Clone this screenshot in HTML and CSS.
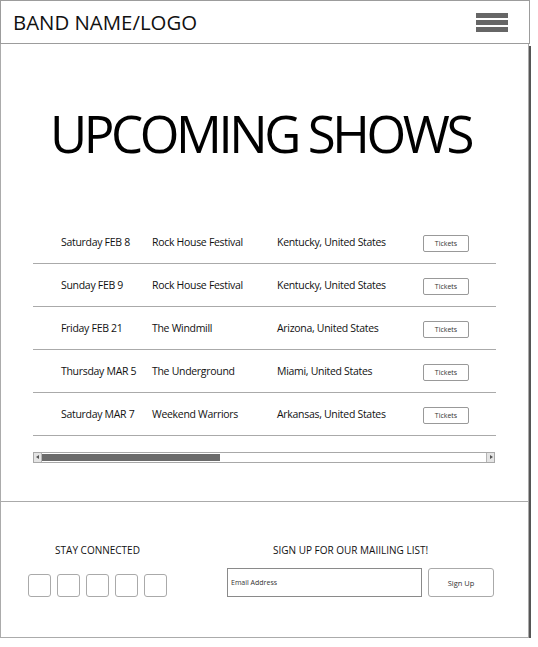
FILE: index.html
```html
<!DOCTYPE html>
<html lang="en">
<head>
<meta charset="utf-8">
<title>Band</title>
<link rel="stylesheet" href="styles.css">
</head>
<body>
<div class="site">
  <header class="topbar">
    <div class="logo">BAND NAME/LOGO</div>
    <div class="burger"><span></span><span></span><span></span></div>
  </header>
  <main class="page">
    <h1 class="title">UPCOMING SHOWS</h1>
    <div class="shows">
      <div class="row"><span class="date">Saturday FEB 8</span><span class="venue">Rock House Festival</span><span class="loc">Kentucky, United States</span><span class="btn">Tickets</span></div>
      <div class="row"><span class="date">Sunday FEB 9</span><span class="venue">Rock House Festival</span><span class="loc">Kentucky, United States</span><span class="btn">Tickets</span></div>
      <div class="row"><span class="date">Friday FEB 21</span><span class="venue">The Windmill</span><span class="loc">Arizona, United States</span><span class="btn">Tickets</span></div>
      <div class="row"><span class="date">Thursday MAR 5</span><span class="venue">The Underground</span><span class="loc">Miami, United States</span><span class="btn">Tickets</span></div>
      <div class="row"><span class="date">Saturday MAR 7</span><span class="venue">Weekend Warriors</span><span class="loc">Arkansas, United States</span><span class="btn">Tickets</span></div>
    </div>
    <div class="scrollbar">
      <span class="arrow arrow-left"></span>
      <span class="track"><span class="thumb"></span></span>
      <span class="arrow arrow-right"></span>
    </div>
    <footer class="footer">
      <div class="connect">
        <div class="label">STAY CONNECTED</div>
        <div class="socials"><span></span><span></span><span></span><span></span><span></span></div>
      </div>
      <div class="mailing">
        <div class="label mail-label">SIGN UP FOR OUR MAIILING LIST!</div>
        <div class="form">
          <div class="email">Email Address</div>
          <div class="signup">Sign Up</div>
        </div>
      </div>
    </footer>
  </main>
</div>
</body>
</html>
```
FILE: styles.css
```css
* { box-sizing: border-box; }
body {
  margin: 0;
  background: #fff;
  font-family: "Open Sans", "Noto Sans", sans-serif;
  color: #111;
}
.site { width: 532px; }
.topbar {
  position: relative;
  z-index: 1;
  width: 530px;
  height: 44px;
  border: 1px solid #9c9c9c;
  background: #fff;
  display: flex;
  align-items: center;
  justify-content: space-between;
  padding: 0 21px 0 12px;
}
.logo {
  font-size: 20.4px;
  line-height: 1;
  color: #111;
  margin-top: 1px;
}
.burger {
  display: flex;
  flex-direction: column;
  gap: 2px;
  margin-top: 1px;
}
.burger span {
  display: block;
  width: 32px;
  height: 5px;
  background: #666;
}
.page {
  width: 529px;
  height: 594px;
  border: 1px solid #ababab;
  border-top: 0;
  box-shadow: 2px 2px 0 #555;
  display: flex;
  flex-direction: column;
}
.title {
  margin: 64px 0 0;
  padding-right: 8px;
  font-size: 51px;
  letter-spacing: -3.4px;
  line-height: 1;
  font-weight: 400;
  text-align: center;
  color: #000;
}
.shows {
  margin: 62px 0 0 32px;
  width: 463px;
}
.row {
  display: grid;
  grid-template-columns: 91px 125px 146px 46px;
  align-items: center;
  height: 43px;
  padding-left: 28px;
  border-bottom: 1px solid #aaa;
  font-size: 10.5px;
  letter-spacing: -0.3px;
  color: #111;
  white-space: nowrap;
}
.btn {
  display: flex;
  align-items: center;
  justify-content: center;
  height: 17px;
  border: 1px solid #999;
  border-radius: 2px;
  font-size: 7px;
  letter-spacing: 0;
  color: #333;
  margin-top: 2px;
}
.scrollbar {
  margin: 16px 0 0 32px;
  width: 462px;
  height: 11px;
  border: 1px solid #a8a8a8;
  display: flex;
  background: #fff;
}
.arrow {
  position: relative;
  width: 8px;
  background: #e4e4e4;
}
.arrow-left { border-right: 1px solid #b5b5b5; }
.arrow-right { border-left: 1px solid #b5b5b5; }
.arrow::after {
  content: "";
  position: absolute;
  top: 2px;
  border-top: 2.5px solid transparent;
  border-bottom: 2.5px solid transparent;
}
.arrow-left::after { left: 2px; border-right: 3px solid #555; }
.arrow-right::after { left: 3px; border-left: 3px solid #555; }
.track {
  flex: 1;
  display: flex;
  align-items: center;
}
.thumb {
  display: block;
  width: 178px;
  height: 7px;
  background: #6b6b6b;
}
.footer {
  margin-top: 38px;
  flex: 1;
  border-top: 1px solid #aaa;
  display: flex;
  align-items: flex-start;
  padding: 41px 0 0 27px;
}
.label {
  font-size: 10px;
  line-height: 14px;
  color: #111;
  white-space: nowrap;
}
.connect {
  width: 139px;
  display: flex;
  flex-direction: column;
  align-items: center;
}
.socials {
  display: flex;
  gap: 6px;
  margin-top: 17px;
}
.socials span {
  display: block;
  width: 23px;
  height: 23px;
  border: 1px solid #aaa;
  border-radius: 3px;
}
.mailing {
  margin-left: 60px;
}
.mail-label { padding-left: 46px; }
.form {
  display: flex;
  gap: 6px;
  margin-top: 11px;
}
.email {
  width: 195px;
  height: 29px;
  border: 1px solid #8a8a8a;
  font-size: 7px;
  color: #333;
  padding-left: 3px;
  display: flex;
  align-items: center;
}
.signup {
  width: 66px;
  height: 29px;
  border: 1px solid #aaa;
  border-radius: 3px;
  font-size: 7.5px;
  color: #333;
  display: flex;
  align-items: center;
  justify-content: center;
}
```
